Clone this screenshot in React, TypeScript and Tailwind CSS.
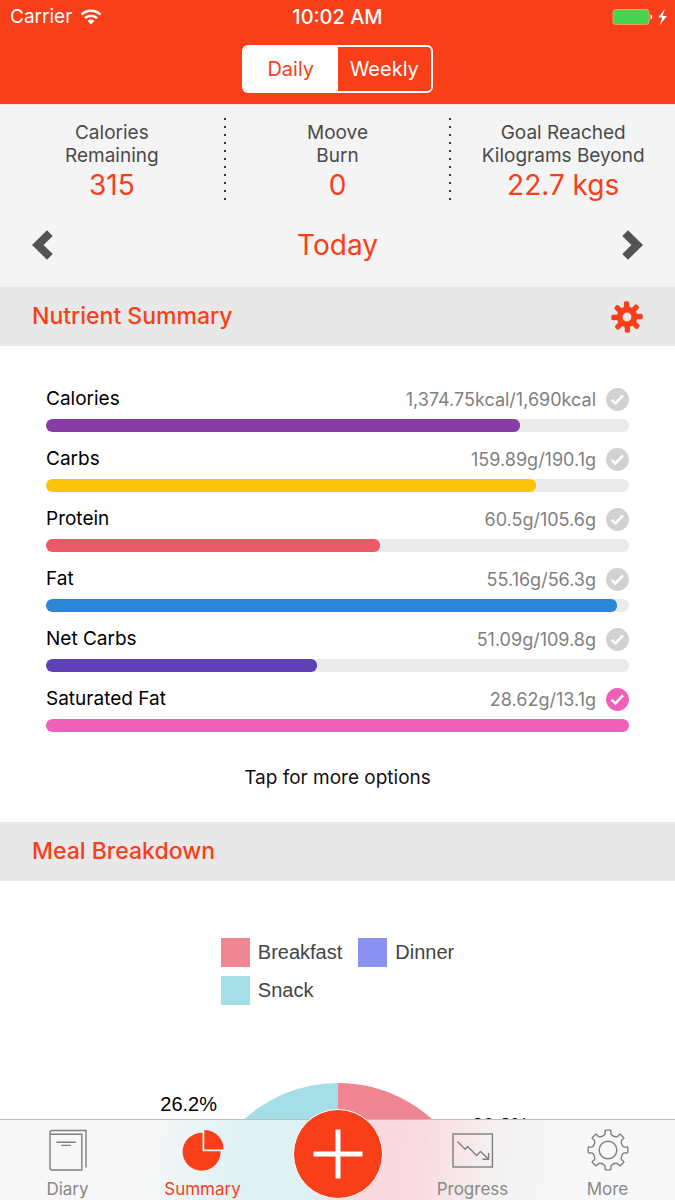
import { useState } from "react"

const RED = "#f93e1a"

const nutrients = [
  { name: "Calories", value: "1,374.75kcal/1,690kcal", percent: 81.3, color: "#873da5", done: false },
  { name: "Carbs", value: "159.89g/190.1g", percent: 84.1, color: "#fdc30b", done: false },
  { name: "Protein", value: "60.5g/105.6g", percent: 57.3, color: "#ea5965", done: false },
  { name: "Fat", value: "55.16g/56.3g", percent: 98, color: "#2b86d6", done: false },
  { name: "Net Carbs", value: "51.09g/109.8g", percent: 46.5, color: "#5e42b5", done: false },
  { name: "Saturated Fat", value: "28.62g/13.1g", percent: 100, color: "#f05fb8", done: true },
]

// Point on a circle, angle in degrees clockwise from 12 o'clock
function polar(cx: number, cy: number, r: number, deg: number) {
  const a = ((deg - 90) * Math.PI) / 180
  return `${(cx + r * Math.cos(a)).toFixed(2)} ${(cy + r * Math.sin(a)).toFixed(2)}`
}

function slicePath(cx: number, cy: number, r: number, from: number, to: number) {
  const large = to - from > 180 ? 1 : 0
  return `M${cx} ${cy}L${polar(cx, cy, r, from)}A${r} ${r} 0 ${large} 1 ${polar(cx, cy, r, to)}Z`
}

function gearPath(c: number) {
  let d = ""
  for (let i = 0; i < 8; i++) {
    const a = i * 45
    d += `${i === 0 ? "M" : "L"}${polar(c, c, 15.4, a - 14)}`
    d += `Q${polar(c, c, 16, a - 10)} ${polar(c, c, 17.2, a - 9.5)}`
    d += `L${polar(c, c, 19, a - 9)}Q${polar(c, c, 20, a - 8.5)} ${polar(c, c, 20, a - 7)}`
    d += `L${polar(c, c, 20, a + 7)}Q${polar(c, c, 20, a + 8.5)} ${polar(c, c, 19, a + 9)}`
    d += `L${polar(c, c, 17.2, a + 9.5)}Q${polar(c, c, 16, a + 10)} ${polar(c, c, 15.4, a + 14)}`
    d += `Q${polar(c, c, 14.4, a + 22.5)} ${polar(c, c, 15.4, a + 31)}`
  }
  return d + "Z"
}

function WifiIcon() {
  return (
    <svg width="22" height="16" viewBox="0 0 22 16" fill="none" stroke="white" strokeWidth="2.4">
      <path d="M1.5 5.6a13.6 13.6 0 0 1 19 0" />
      <path d="M5 9.2a8.6 8.6 0 0 1 12 0" />
      <path d="M11 15.4 7.6 12a4.8 4.8 0 0 1 6.8 0Z" fill="white" stroke="none" />
    </svg>
  )
}

function BatteryIcon() {
  return (
    <svg width="56" height="18" viewBox="0 0 56 18">
      <rect x="1" y="1.5" width="36" height="15" rx="2.5" fill="#44d551" stroke="#f79a5c" />
      <path d="M38.5 6.5c2.4.6 2.4 4.4 0 5Z" fill="white" />
      <path d="M52.8 1 46.2 9.6h3.9l-2.3 7.6 7-9.3h-4.1Z" fill="white" />
    </svg>
  )
}

function Chevron({ flip = false }: { flip?: boolean }) {
  return (
    <svg width="22" height="30" viewBox="0 0 22 30" className={flip ? "rotate-180" : ""}>
      <path d="M0 15 15 0.3 20.7 6 11.6 15l9.1 9-5.7 5.7Z" fill="#535353" />
    </svg>
  )
}

function GearIcon() {
  return (
    <svg width="32" height="32" viewBox="-16 -16 32 32">
      <g transform="rotate(-2)">
        <circle r="7.4" fill="none" stroke={RED} strokeWidth="6" />
        {[0, 45, 90, 135, 180, 225, 270, 315].map((a) => (
          <rect key={a} x="-2.7" y="-15.8" width="5.4" height="8" rx="1.8" fill={RED} transform={`rotate(${a})`} />
        ))}
      </g>
    </svg>
  )
}

function CheckIcon({ done }: { done: boolean }) {
  return (
    <svg width="23" height="23" viewBox="0 0 23 23" className="shrink-0">
      <circle cx="11.5" cy="11.5" r="11.4" fill={done ? "#f05fb8" : "#d1d1d3"} />
      <path d="M5.6 11.9 9.4 15.4 17 7.4" fill="none" stroke="white" strokeWidth="2.6" />
    </svg>
  )
}

function DiaryIcon() {
  return (
    <svg width="40" height="42" viewBox="0 0 40 42" fill="none" stroke="#7f7f7f" strokeWidth="1.4">
      <path d="M2 5.2h31.8V41H4a2 2 0 0 1-2-2V3.5a2 2 0 0 1 2-2h34V38.5" />
      <path d="M8.4 13.2h19.4M13.2 16.4h9.6" />
    </svg>
  )
}

function SummaryIcon() {
  return (
    <svg width="42" height="42" viewBox="0 0 42 42" fill={RED}>
      <path d="M20.5 3.8A19 19 0 1 0 38.6 22.3H20.5Z" />
      <path d="M22.3 1A19.2 19.2 0 0 1 41.6 20.6H22.3Z" />
    </svg>
  )
}

function ProgressIcon() {
  return (
    <svg width="42" height="42" viewBox="0 0 42 42" fill="none" stroke="#7f7f7f" strokeWidth="1.4">
      <rect x="1" y="5" width="39.4" height="33" />
      <path d="m5.4 12.4 7.8 7.8 2.4-2.6 9 9 4-4 8 7.6M36.6 24v6.2h-6.2" />
    </svg>
  )
}

function MoreIcon() {
  return (
    <svg width="42" height="42" viewBox="0 0 42 42" fill="none" stroke="#7f7f7f" strokeWidth="1.4">
      <path d={gearPath(21)} />
      <circle cx="21" cy="21" r="8.8" />
    </svg>
  )
}

function Stat({ lines, value }: { lines: [string, string]; value: string }) {
  return (
    <div className="flex-1 pt-[3px] text-center">
      <p className="text-[19px] leading-[23px] text-[#4a4a4a]">
        {lines[0]}
        <br />
        {lines[1]}
      </p>
      <p className="text-[28px] leading-9 text-[#f93e1a]">{value}</p>
    </div>
  )
}

function Dots() {
  return <div className="h-[83px] w-[2px] bg-[repeating-linear-gradient(to_bottom,#333_0_2px,transparent_2px_8px)]" />
}

function LegendItem({ color, label }: { color: string; label: string }) {
  return (
    <li className="flex items-center gap-2">
      <span className="size-[29px]" style={{ backgroundColor: color }} />
      {label}
    </li>
  )
}

function Tab({ icon, label, active = false }: { icon: React.ReactNode; label: string; active?: boolean }) {
  return (
    <a
      href="#"
      aria-current={active ? "page" : undefined}
      className={`flex flex-col items-center pt-[9px] text-[17px] leading-[18px] ${active ? "text-[#f93e1a]" : "text-[#888]"}`}
    >
      {icon}
      <span className="mt-[9px]">{label}</span>
    </a>
  )
}

export default function App() {
  const [range, setRange] = useState("Daily")

  return (
    <div className="relative flex h-screen flex-col overflow-hidden bg-white font-['Inter',sans-serif]">
      <header className="shrink-0 border-b border-[#fde3dd] bg-[#f93e1a] pb-[11px] text-white">
        <div className="grid h-[34px] grid-cols-3 items-center px-[10px] text-[19px]">
          <div className="flex items-center gap-2">
            Carrier
            <WifiIcon />
          </div>
          <div className="text-center text-[20px] font-medium">10:02 AM</div>
          <div className="-mr-[3px] flex justify-end">
            <BatteryIcon />
          </div>
        </div>
        <div className="mx-auto mt-[11px] grid h-12 w-[191px] grid-cols-2 overflow-hidden rounded-md border-2 border-white text-[20px]">
          {["Daily", "Weekly"].map((item) => (
            <button
              key={item}
              type="button"
              aria-pressed={range === item}
              onClick={() => setRange(item)}
              className={range === item ? "bg-white text-[#f93e1a]" : "text-white"}
            >
              {item}
            </button>
          ))}
        </div>
      </header>

      <main className="flex-1 overflow-y-auto [scrollbar-width:none]">
        <section className="bg-[#f4f4f4] pt-[13px] pb-6">
          <div className="flex">
            <Stat lines={["Calories", "Remaining"]} value="315" />
            <Dots />
            <Stat lines={["Moove", "Burn"]} value="0" />
            <Dots />
            <Stat lines={["Goal Reached", "Kilograms Beyond"]} value="22.7 kgs" />
          </div>
          <div className="mt-6 flex items-center justify-between px-8">
            <button type="button" aria-label="Previous day">
              <Chevron />
            </button>
            <h1 className="text-[28px] leading-9 text-[#f93e1a]">Today</h1>
            <button type="button" aria-label="Next day">
              <Chevron flip />
            </button>
          </div>
        </section>

        <section>
          <div className="flex h-[59px] items-center justify-between bg-[#e8e8e8] px-8">
            <h2 className="text-[23px] font-medium text-[#f93e1a]">Nutrient Summary</h2>
            <button type="button" aria-label="Nutrient settings">
              <GearIcon />
            </button>
          </div>
          <ul className="space-y-[15px] px-[46px] pt-[41px]">
            {nutrients.map((n) => (
              <li key={n.name}>
                <div className="flex h-6 items-center">
                  <span className="flex-1 text-[19px] text-black">{n.name}</span>
                  <span className="mr-[10px] text-[18px] text-[#808080]">{n.value}</span>
                  <CheckIcon done={n.done} />
                </div>
                <div
                  role="progressbar"
                  aria-label={n.name}
                  aria-valuenow={n.percent}
                  className="mt-2 h-[13px] overflow-hidden rounded-md bg-[#eaeaea]"
                >
                  <div className="h-full rounded-md" style={{ width: `${n.percent}%`, backgroundColor: n.color }} />
                </div>
              </li>
            ))}
          </ul>
          <p className="pt-[34px] pb-8 text-center text-[19px] leading-6 text-[#111]">Tap for more options</p>
        </section>

        <section>
          <div className="flex h-[59px] items-center bg-[#e8e8e8] px-8">
            <h2 className="text-[23px] font-medium text-[#f93e1a]">Meal Breakdown</h2>
          </div>
          <div className="pt-[57px] pb-24 font-['Liberation_Sans',Arial,sans-serif] text-[20px]">
            <ul className="grid grid-cols-[auto_auto] justify-center gap-x-4 gap-y-[9px] leading-[29px] text-[#444]">
              <LegendItem color="#ef8691" label="Breakfast" />
              <LegendItem color="#8b91f0" label="Dinner" />
              <LegendItem color="#a5dee6" label="Snack" />
            </ul>
            <svg width="400" height="290" viewBox="0 0 400 290" className="mx-auto mt-[78px]">
              <path d={slicePath(200, 140, 140, 0, 110.9)} fill="#ef8691" />
              <path d={slicePath(200, 140, 140, 110.9, 265.7)} fill="#8b91f0" />
              <path d={slicePath(200, 140, 140, 265.7, 360)} fill="#a5dee6" />
              <text x="79" y="28" textAnchor="end" fontSize="20">26.2%</text>
              <text x="334" y="49" fontSize="20">30.8%</text>
            </svg>
          </div>
        </section>
      </main>

      <nav className="absolute inset-x-0 bottom-0 grid h-[81px] grid-cols-5 border-t border-[#bdbdbf] bg-[linear-gradient(97deg,#f7f7f7_22%,#def1f5_36%,#def1f5_46%,#f9d9df_54%,#f9dbe1_62%,#f4f3f2_74%,#f7f7f7_85%)]">
        <Tab icon={<DiaryIcon />} label="Diary" />
        <Tab icon={<SummaryIcon />} label="Summary" active />
        <div className="relative">
          <button
            type="button"
            aria-label="Add"
            className="absolute -top-[11px] left-1/2 flex size-[90px] -translate-x-1/2 items-center justify-center rounded-full border border-white bg-[#f93e1a]"
          >
            <svg width="50" height="50" viewBox="0 0 50 50" stroke="white" strokeWidth="5">
              <path d="M25 0.5v49M0.5 25h49" />
            </svg>
          </button>
        </div>
        <Tab icon={<ProgressIcon />} label="Progress" />
        <Tab icon={<MoreIcon />} label="More" />
      </nav>
    </div>
  )
}
